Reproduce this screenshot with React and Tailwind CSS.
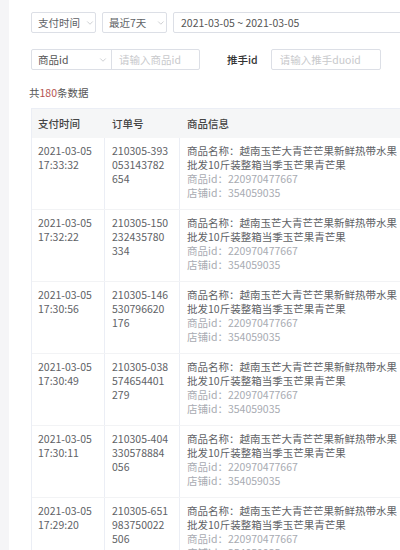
import React from "react";
import { ChevronDown } from "lucide-react";

const rows = [
  { date: "2021-03-05", time: "17:33:32", order: ["210305-393", "053143782", "654"] },
  { date: "2021-03-05", time: "17:32:22", order: ["210305-150", "232435780", "334"] },
  { date: "2021-03-05", time: "17:30:56", order: ["210305-146", "530796620", "176"] },
  { date: "2021-03-05", time: "17:30:49", order: ["210305-038", "574654401", "279"] },
  { date: "2021-03-05", time: "17:30:11", order: ["210305-404", "330578884", "056"] },
  { date: "2021-03-05", time: "17:29:20", order: ["210305-651", "983750022", "506"] },
];

function Select({ label, width, chevronGap }) {
  return (
    <div
      className={`flex h-[21px] items-center rounded-[2px] border border-[#dcdfe6] bg-white pl-[6px] ${width}`}
    >
      <span className="whitespace-nowrap text-[#606266]">{label}</span>
      <ChevronDown size={10} strokeWidth={1.5} className={`text-[#b0b3b8] ${chevronGap}`} />
    </div>
  );
}

export default function App() {
  return (
    <div
      className="flex h-[550px] w-[400px] overflow-hidden bg-white text-[10.5px] leading-[14px] text-[#606266]"
      style={{ fontFamily: '"Noto Sans CJK SC", "Noto Sans", sans-serif' }}
    >
      <div className="w-[9px] shrink-0 bg-[#f5f5f7]" />
      <div className="flex min-w-0 flex-1 flex-col pl-[22px] pt-[12px]">
        {/* filter row 1 */}
        <div className="flex items-center gap-[6px]">
          <Select label="支付时间" width="w-[66px]" chevronGap="ml-[5px]" />
          <Select label="最近7天" width="w-[65px]" chevronGap="ml-[10px]" />
          <div className="flex h-[21px] w-[300px] shrink-0 items-center rounded-[2px] border border-[#dcdfe6] pl-[7px] text-[#555]">
            2021-03-05 ~ 2021-03-05
          </div>
        </div>

        {/* filter row 2 */}
        <div className="mt-[16px] flex items-center">
          <div className="flex h-[21px] items-center rounded-[2px] border border-[#dcdfe6]">
            <div className="flex h-full w-[80px] items-center border-r border-[#dcdfe6] pl-[6px]">
              <span className="text-[#555]">商品id</span>
              <ChevronDown size={10} strokeWidth={1.5} className="ml-[30px] text-[#b0b3b8]" />
            </div>
            <div className="flex w-[87px] items-center pl-[7px] text-[#c8c9cc]">请输入商品id</div>
          </div>
          <span className="ml-[27px] font-medium text-[#333]">推手id</span>
          <div className="ml-[13px] flex h-[21px] w-[110px] items-center rounded-[2px] border border-[#dcdfe6] pl-[8px] text-[#c8c9cc]">
            请输入推手duoid
          </div>
        </div>

        <div className="mt-[16px] -ml-[2px] text-[#555]">
          共<span className="text-[#b5534f]">180</span>条数据
        </div>

        {/* table */}
        <div className="mt-[8px] w-[420px] shrink-0 border-l border-t border-[#ebeef5]">
          <div className="flex h-[29px] items-center bg-[#f5f6f7] font-medium text-[#444]">
            <div className="w-[73px] shrink-0 pl-[6px]">支付时间</div>
            <div className="w-[75px] shrink-0 pl-[7px]">订单号</div>
            <div className="flex-1 pl-[7px]">商品信息</div>
          </div>
          {rows.map((r) => (
            <div key={r.order[0]} className="flex border-b border-[#f2f3f5]">
              <div className="w-[73px] shrink-0 border-r border-[#ebeef5] pb-[9px] pl-[6px] pt-[6px]">
                <div>{r.date}</div>
                <div>{r.time}</div>
              </div>
              <div className="w-[75px] shrink-0 border-r border-[#ebeef5] pb-[9px] pl-[7px] pt-[6px]">
                {r.order.map((o) => (
                  <div key={o}>{o}</div>
                ))}
              </div>
              <div className="flex-1 whitespace-nowrap pb-[9px] pl-[7px] pt-[6px]">
                <div>商品名称：越南玉芒大青芒芒果新鲜热带水果</div>
                <div>批发10斤装整箱当季玉芒果青芒果</div>
                <div className="text-[#a8abb2]">商品id：220970477667</div>
                <div className="text-[#a8abb2]">店铺id：354059035</div>
              </div>
            </div>
          ))}
        </div>
      </div>
    </div>
  );
}
